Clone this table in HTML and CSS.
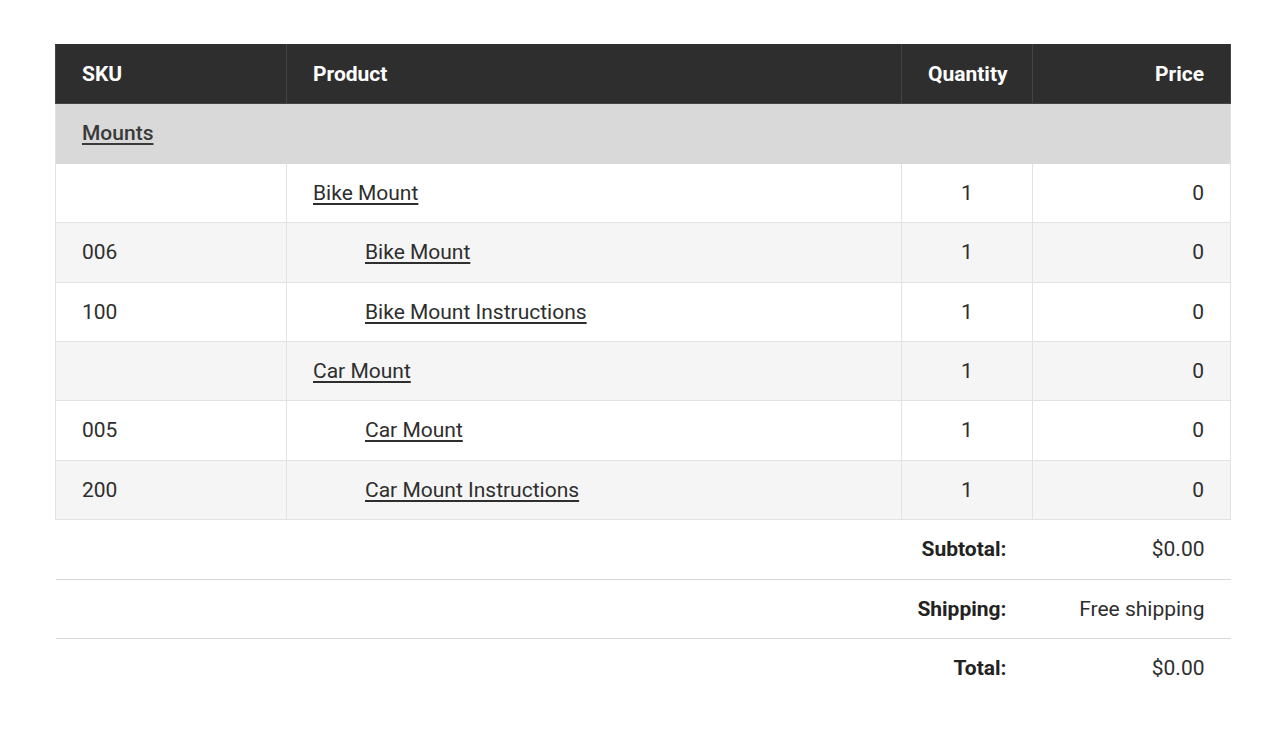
FILE: index.html
```html
<!DOCTYPE html>
<html>
<head>
<meta charset="utf-8">
<link rel="stylesheet" href="styles.css">
</head>
<body>
<div class="page">
  <table class="order">
    <colgroup>
      <col class="c-sku">
      <col class="c-product">
      <col class="c-qty">
      <col class="c-price">
    </colgroup>
    <thead>
      <tr>
        <th class="left">SKU</th>
        <th class="left">Product</th>
        <th class="center">Quantity</th>
        <th class="right">Price</th>
      </tr>
    </thead>
    <tbody>
      <tr class="group">
        <td colspan="4"><a href="#">Mounts</a></td>
      </tr>
      <tr class="odd">
        <td></td>
        <td><a href="#">Bike Mount</a></td>
        <td class="center">1</td>
        <td class="right">0</td>
      </tr>
      <tr class="even">
        <td>006</td>
        <td class="child"><a href="#">Bike Mount</a></td>
        <td class="center">1</td>
        <td class="right">0</td>
      </tr>
      <tr class="odd">
        <td>100</td>
        <td class="child"><a href="#">Bike Mount Instructions</a></td>
        <td class="center">1</td>
        <td class="right">0</td>
      </tr>
      <tr class="even">
        <td></td>
        <td><a href="#">Car Mount</a></td>
        <td class="center">1</td>
        <td class="right">0</td>
      </tr>
      <tr class="odd">
        <td>005</td>
        <td class="child"><a href="#">Car Mount</a></td>
        <td class="center">1</td>
        <td class="right">0</td>
      </tr>
      <tr class="even">
        <td>200</td>
        <td class="child"><a href="#">Car Mount Instructions</a></td>
        <td class="center">1</td>
        <td class="right">0</td>
      </tr>
    </tbody>
    <tfoot>
      <tr>
        <th colspan="3" class="right">Subtotal:</th>
        <td class="right">$0.00</td>
      </tr>
      <tr>
        <th colspan="3" class="right">Shipping:</th>
        <td class="right">Free shipping</td>
      </tr>
      <tr class="last">
        <th colspan="3" class="right">Total:</th>
        <td class="right">$0.00</td>
      </tr>
    </tfoot>
  </table>
</div>
</body>
</html>
```

FILE: styles.css
```css
html, body {
  margin: 0;
  padding: 0;
  background: #ffffff;
}

body {
  font-family: Roboto, "Liberation Sans", sans-serif;
  font-size: 21px;
  color: #2e2e2e;
}

.page {
  padding: 44px 50px 0 55px;
}

.order {
  width: 1175px;
  border-collapse: collapse;
  table-layout: fixed;
}

.c-sku { width: 231px; }
.c-product { width: 615px; }
.c-qty { width: 131px; }
.c-price { width: 198px; }

.order th,
.order td {
  padding: 16px 26px;
  line-height: 26.4px;
  text-align: left;
  vertical-align: middle;
}

.order thead th {
  background: #2e2e2e;
  color: #ffffff;
  font-weight: 700;
  border: 1px solid #444444;
  border-top-color: #2e2e2e;
}

.order tbody td {
  border: 1px solid #e2e2e2;
}

.order tbody tr.group td {
  background: #d9d9d9;
  font-weight: 500;
  border-color: #d9d9d9;
  border-left-color: #e2e2e2;
  border-right-color: #e2e2e2;
}

.order tbody tr.odd td { background: #ffffff; }
.order tbody tr.even td { background: #f5f5f5; }

.order tbody td.child {
  padding-left: 78px;
}

.order a {
  color: #2e2e2e;
  text-decoration: underline;
  text-underline-offset: 3px;
  text-decoration-thickness: 1.5px;
}

.order tbody tr.group a {
  color: #3a3a3a;
  text-decoration-thickness: 2px;
}

.order tfoot th {
  font-weight: 700;
  color: #222222;
}

.order tfoot td {
  color: #2e2e2e;
}

.order tfoot tr th,
.order tfoot tr td {
  border-bottom: 1px solid #d8d8d8;
}

.order tfoot tr.last th,
.order tfoot tr.last td {
  border-bottom: none;
}

.order .left { text-align: left; }
.order .center { text-align: center; }
.order .right { text-align: right; }
```
